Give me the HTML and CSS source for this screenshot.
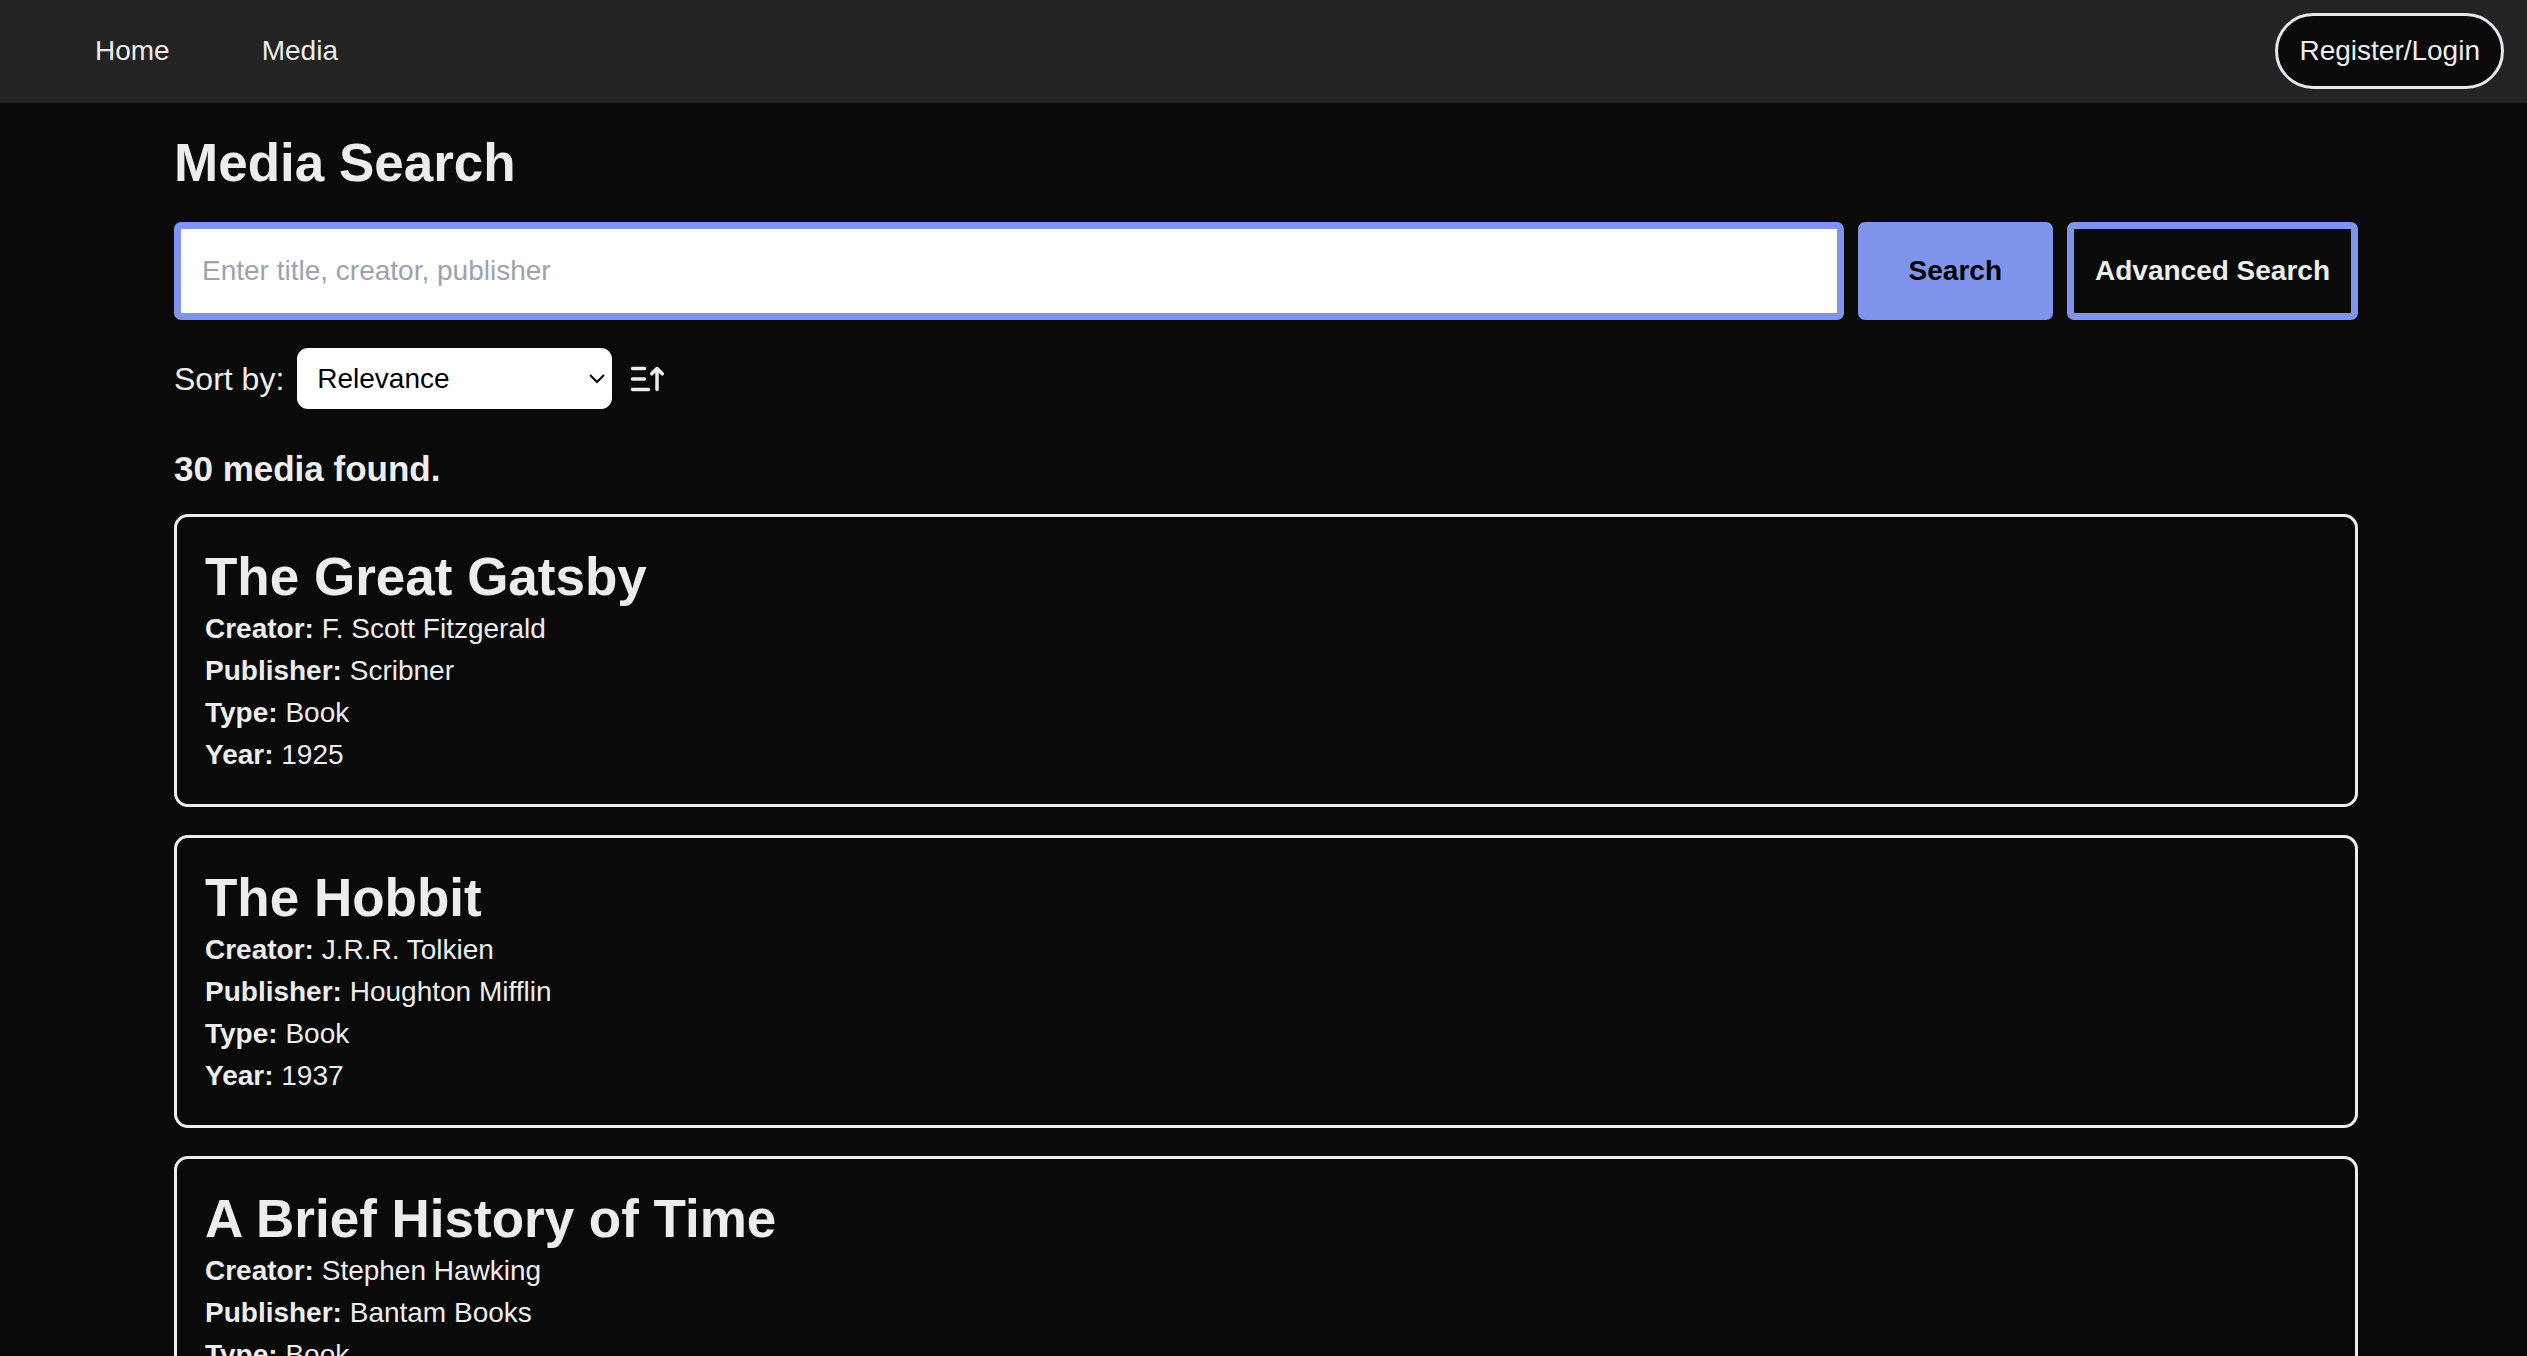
FILE: index.html
```html
<!DOCTYPE html>
<html lang="en">
<head>
  <meta charset="utf-8">
  <meta name="viewport" content="width=device-width, initial-scale=1">
  <title>Media Search</title>
  <link rel="stylesheet" href="styles.css">
</head>
<body>
  <header class="site-header">
    <nav class="site-nav">
      <a href="#home">Home</a>
      <a href="#media">Media</a>
    </nav>
    <button type="button" class="login-button">Register/Login</button>
  </header>

  <main class="page">
    <h1 class="heading">Media Search</h1>

    <form class="search-form">
      <input class="search-input" type="text" name="q" aria-label="Search media" placeholder="Enter title, creator, publisher">
      <button type="submit" class="button button-primary">Search</button>
      <button type="button" class="button button-outline">Advanced Search</button>
    </form>

    <div class="sort-row">
      <label class="sort-label" for="sort">Sort by:</label>
      <div class="select-wrap">
        <select id="sort" class="sort-select">
          <option>Relevance</option>
          <option>Title</option>
          <option>Year</option>
        </select>
        <svg class="select-arrow" viewBox="0 0 18 12" aria-hidden="true"><path d="M2 2l7 7 7-7"/></svg>
      </div>
      <button type="button" class="sort-direction" aria-label="Sort direction">
        <svg viewBox="0 0 42 42" aria-hidden="true"><path d="M7.5 10.5h12M7.5 21h12M7.5 31.5h16M32 31.5v-21M26.7 15.8l5.3-5.3 5.3 5.3"/></svg>
      </button>
    </div>

    <h2 class="result-count">30 media found.</h2>

    <section class="results">
      <article class="card">
        <h3 class="heading">The Great Gatsby</h3>
        <p><strong>Creator:</strong> F. Scott Fitzgerald</p>
        <p><strong>Publisher:</strong> Scribner</p>
        <p><strong>Type:</strong> Book</p>
        <p><strong>Year:</strong> 1925</p>
      </article>
      <article class="card">
        <h3 class="heading">The Hobbit</h3>
        <p><strong>Creator:</strong> J.R.R. Tolkien</p>
        <p><strong>Publisher:</strong> Houghton Mifflin</p>
        <p><strong>Type:</strong> Book</p>
        <p><strong>Year:</strong> 1937</p>
      </article>
      <article class="card">
        <h3 class="heading">A Brief History of Time</h3>
        <p><strong>Creator:</strong> Stephen Hawking</p>
        <p><strong>Publisher:</strong> Bantam Books</p>
        <p><strong>Type:</strong> Book</p>
        <p><strong>Year:</strong> 1988</p>
      </article>
    </section>
  </main>
</body>
</html>
```
FILE: styles.css
```css
:root {
  --background: #0a0a0a;
  --foreground: #ededed;
  --bar: #232323;
  --accent: #8094eb;
}

* {
  box-sizing: border-box;
  margin: 0;
}

body {
  background: var(--background);
  color: var(--foreground);
  font: 28px/42px "Liberation Sans", Arial, Helvetica, sans-serif;
}

button,
input,
select {
  font: inherit;
  color: inherit;
}

button {
  cursor: pointer;
}

.site-header {
  display: flex;
  align-items: center;
  justify-content: space-between;
  padding: 13px 23px 14px 95px;
  background: var(--bar);
}

.site-nav {
  display: flex;
  gap: 92px;
}

.site-nav a {
  color: inherit;
  text-decoration: none;
}

.login-button {
  padding: 14px 21px;
  border: 3px solid #e5e7eb;
  border-radius: 38px;
  background: var(--background);
}

.page {
  padding: 28px 169px 28px 174px;
}

.heading {
  font-size: 53px;
  line-height: 63px;
  font-weight: 700;
}

.search-form {
  display: flex;
  gap: 14px;
  margin-top: 28px;
}

.search-input {
  flex: 1;
  min-width: 0;
  height: 98px;
  padding: 21px;
  border: 7px solid var(--accent);
  border-radius: 7px;
  background: #fff;
  color: #000;
}

.search-input::placeholder {
  color: #9ca3af;
}

.button {
  padding: 21px;
  border: 7px solid var(--accent);
  border-radius: 7px;
  font-weight: 700;
}

.button-primary {
  padding: 21px 44px;
  background: var(--accent);
  color: #000;
}

.button-outline {
  background: var(--background);
}

.sort-row {
  display: flex;
  align-items: center;
  gap: 13px;
  margin-top: 28px;
}

.sort-label {
  font-size: 32px;
}

.select-wrap {
  display: grid;
  align-items: center;
  width: 315px;
}

.sort-select {
  grid-area: 1 / 1;
  height: 61px;
  padding: 0 20px;
  border: 0;
  border-radius: 11px;
  background: #fff;
  color: #000;
  appearance: none;
}

.select-arrow {
  grid-area: 1 / 1;
  justify-self: end;
  width: 18px;
  height: 12px;
  margin-right: 6px;
  pointer-events: none;
  fill: none;
  stroke: #000;
  stroke-width: 2;
}

.sort-direction {
  display: flex;
  padding: 0;
  border: 0;
  background: none;
}

.sort-direction svg {
  width: 42px;
  height: 42px;
  fill: none;
  stroke: currentColor;
  stroke-width: 3.5;
  stroke-linecap: round;
  stroke-linejoin: round;
}

.result-count {
  margin-top: 35px;
  font-size: 35px;
  line-height: 49px;
}

.results {
  display: grid;
  gap: 28px;
  margin-top: 21px;
}

.card {
  padding: 28px;
  border: 3px solid var(--foreground);
  border-radius: 14px;
}
```
